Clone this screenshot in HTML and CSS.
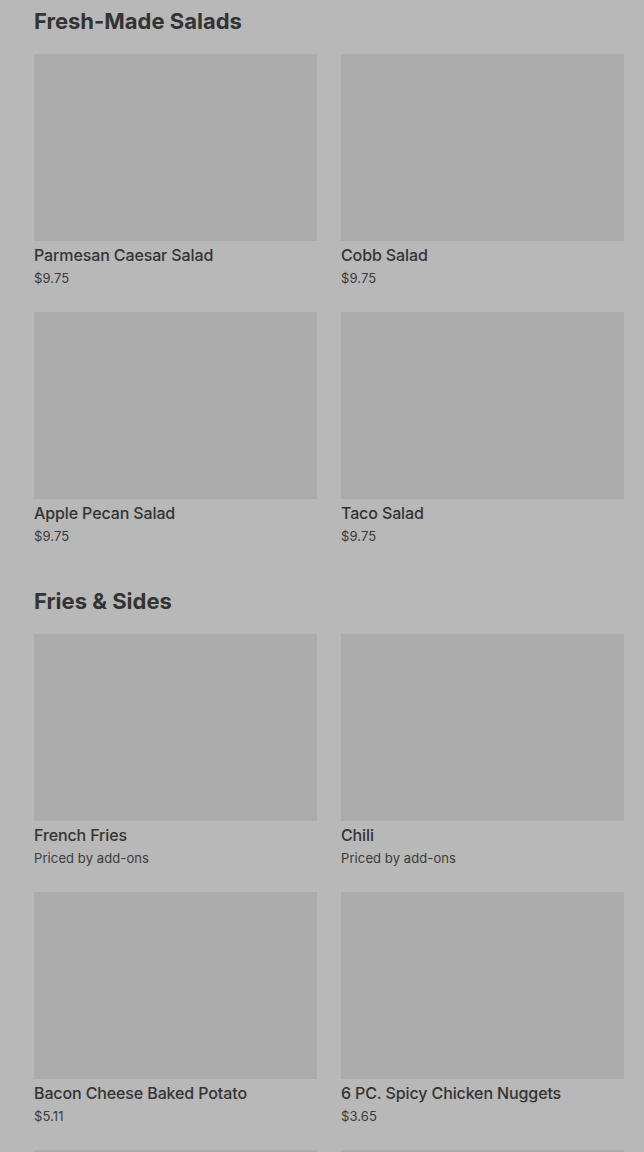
FILE: index.html
```html
<!DOCTYPE html>
<html>
<head>
<meta charset="utf-8">
<link rel="stylesheet" href="styles.css">
</head>
<body>
<main class="menu">
  <section class="section">
    <h2 class="section-title">Fresh-Made Salads</h2>
    <div class="grid">
      <div class="card"><div class="thumb"></div><div class="name">Parmesan Caesar Salad</div><div class="price">$9.75</div></div>
      <div class="card"><div class="thumb"></div><div class="name">Cobb Salad</div><div class="price">$9.75</div></div>
      <div class="card"><div class="thumb"></div><div class="name">Apple Pecan Salad</div><div class="price">$9.75</div></div>
      <div class="card"><div class="thumb"></div><div class="name">Taco Salad</div><div class="price">$9.75</div></div>
    </div>
  </section>
  <section class="section">
    <h2 class="section-title">Fries &amp; Sides</h2>
    <div class="grid">
      <div class="card"><div class="thumb"></div><div class="name">French Fries</div><div class="price">Priced by add-ons</div></div>
      <div class="card"><div class="thumb"></div><div class="name">Chili</div><div class="price">Priced by add-ons</div></div>
      <div class="card"><div class="thumb"></div><div class="name">Bacon Cheese Baked Potato</div><div class="price">$5.11</div></div>
      <div class="card"><div class="thumb"></div><div class="name">6 PC. Spicy Chicken Nuggets</div><div class="price">$3.65</div></div>
      <div class="card"><div class="thumb"></div><div class="name">&nbsp;</div><div class="price">&nbsp;</div></div>
      <div class="card"><div class="thumb"></div><div class="name">&nbsp;</div><div class="price">&nbsp;</div></div>
    </div>
  </section>
</main>
</body>
</html>
```
FILE: styles.css
```css
html, body {
  margin: 0;
  padding: 0;
  background: #b8b8b8;
  overflow: hidden;
}
.menu {
  padding: 7px 20px 0 34px;
  display: flex;
  flex-direction: column;
  gap: 42px;
  font-family: Inter, "Liberation Sans", sans-serif;
  color: #333333;
}
.section-title {
  margin: 0 0 19px 0;
  font-size: 22px;
  line-height: 28px;
  font-weight: 700;
  letter-spacing: 0;
  color: #333333;
}
.grid {
  display: grid;
  grid-template-columns: 283px 283px;
  column-gap: 24px;
  row-gap: 25px;
}
.card {
  display: flex;
  flex-direction: column;
}
.thumb {
  height: 187px;
  background: #ababab;
}
.name {
  margin-top: 4px;
  font-size: 16px;
  line-height: 20px;
  font-weight: 500;
  letter-spacing: -0.12px;
  color: #333333;
}
.price {
  margin-top: 4px;
  font-size: 13px;
  line-height: 18px;
  color: #3a3a3a;
  letter-spacing: 0.1px;
}
```
